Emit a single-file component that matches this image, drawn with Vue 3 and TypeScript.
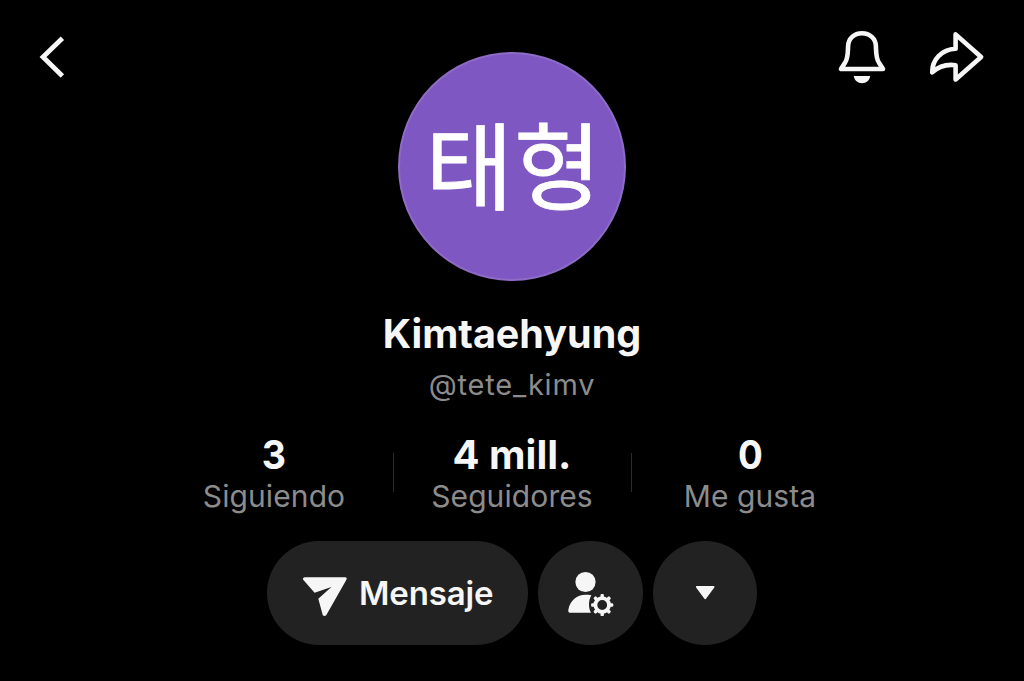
<script setup lang="ts">
interface Stat {
  id: string
  value: string
  label: string
}

const stats: Stat[] = [
  { id: 'following', value: '3', label: 'Siguiendo' },
  { id: 'followers', value: '4 mill.', label: 'Seguidores' },
  { id: 'likes', value: '0', label: 'Me gusta' },
]

const teeth: number[] = [0, 45, 90, 135, 180, 225, 270, 315]
</script>

<template>
  <main class="profile">
    <header class="top">
      <svg class="back" width="30" height="44" viewBox="38 35 30 44">
        <path d="M62.4 38.2L43 57L62.4 76" fill="none" stroke="#f6f6f6" stroke-width="4.8" />
      </svg>
      <div class="avatar"><span>태형</span></div>
      <div class="actions">
        <svg width="50" height="56" viewBox="837 29 50 56">
          <path
            d="M862 33.2C854 33.2 848.4 38.6 848.1 46C847.8 54 848 58.5 845 62.8L841 69H883L879 62.8C876 58.5 876.2 54 875.9 46C875.6 38.6 870 33.2 862 33.2Z"
            fill="none" stroke="#f6f6f6" stroke-width="4.6" stroke-linejoin="round"
          />
          <path d="M853.8 76H870.2C869.6 80.4 866.4 83.2 862 83.2C857.6 83.2 854.4 80.4 853.8 76Z" fill="#f6f6f6" />
        </svg>
        <svg class="share" width="58" height="56" viewBox="928 29 58 56">
          <path
            d="M955.6 34.4L981.1 57L955.6 79.4V65.2C947.5 64.2 939.5 65.6 932.2 72.4C932 59.5 941.5 49.6 955.6 48.8Z"
            fill="none" stroke="#f6f6f6" stroke-width="4.6" stroke-linejoin="round"
          />
        </svg>
      </div>
    </header>

    <h1 class="name"><span>Kimtaehyung</span></h1>
    <p class="handle"><span>@tete_kimv</span></p>

    <section class="stats">
      <div v-for="s in stats" :key="s.id" class="stat" :class="s.id">
        <strong>{{ s.value }}</strong>
        <span class="label">{{ s.label }}</span>
      </div>
    </section>

    <nav class="buttons">
      <button class="btn message">
        <svg width="46" height="42" viewBox="302 576 46 42">
          <path
            d="M304.6 577.2H345.2Q347.4 577.6 346.4 579.8L326.2 615.2Q324.4 616.8 322.8 615.2L318.3 598.8L331.4 586.9L314.6 592.8L303.2 579.8Q302.2 577.8 304.6 577.2Z"
            fill="#f6f6f6"
          />
        </svg>
        <span>Mensaje</span>
      </button>
      <button class="btn round">
        <svg width="104" height="104" viewBox="538.2 541 104 104">
          <circle cx="585.7" cy="582" r="10.1" fill="#f6f6f6" />
          <path
            d="M591.6 595.3C588.6 600.3 588.4 607.5 591.2 612.8H570.8C569 612.8 568.2 611.6 568.5 609.9C570.2 600.6 577.3 594.8 585.7 594.8C587.8 594.8 589.8 594.9 591.6 595.3Z"
            fill="#f6f6f6"
          />
          <g transform="translate(602.4 605)">
            <circle r="6.8" fill="none" stroke="#f6f6f6" stroke-width="3.8" />
            <rect
              v-for="a in teeth" :key="a" x="-1.7" y="-11.1" width="3.4" height="4.5" rx="1.2"
              fill="#f6f6f6" :transform="`rotate(${a})`"
            />
          </g>
        </svg>
      </button>
      <button class="btn round">
        <svg width="104" height="104" viewBox="652.7 541 104 104">
          <path
            d="M696.6 586.9H713.2L704.9 598.2Z"
            fill="#f6f6f6" stroke="#f6f6f6" stroke-width="2" stroke-linejoin="round"
          />
        </svg>
      </button>
    </nav>
  </main>
</template>

<style>
html,
body {
  margin: 0;
  background: #000;
}
</style>

<style scoped>
.profile {
  box-sizing: border-box;
  width: 1024px;
  height: 681px;
  overflow: hidden;
  background: #000;
  color: #f6f6f6;
  font-family: Inter, "Noto Sans", "Noto Sans CJK KR", sans-serif;
  display: flex;
  flex-direction: column;
  align-items: center;
}
svg {
  display: block;
  flex: none;
}
.top {
  box-sizing: border-box;
  width: 100%;
  height: 281px;
  padding: 29px 38px 0;
  display: grid;
  grid-template-columns: 1fr 228px 1fr;
}
.back {
  margin-top: 6px;
}
.avatar {
  box-sizing: border-box;
  width: 228px;
  height: 229px;
  margin-top: 23px;
  padding: 0 0 10px 4px;
  border: 2px solid #8e6cc6;
  border-radius: 50%;
  background: #7e57c2;
  color: #fff;
  font: 400 95px/1 "Noto Sans CJK KR", sans-serif;
  letter-spacing: 1px;
  -webkit-text-stroke: 0.8px #fff;
  display: flex;
  align-items: center;
  justify-content: center;
}
.actions {
  display: flex;
  justify-content: flex-end;
  gap: 41px;
}
.name,
.handle {
  margin: 0;
  white-space: nowrap;
}
.name {
  margin-top: 29px;
  font-size: 39.5px;
  line-height: 48px;
  font-weight: 700;
}
.name span,
.handle span,
.stat strong,
.label,
.message span {
  display: inline-block;
}
.handle {
  margin-top: 9px;
  font-size: 29px;
  line-height: 36px;
  letter-spacing: 0.8px;
  color: #8c8c8c;
}
.stats {
  margin-top: 30px;
  height: 89px;
  display: grid;
  grid-template-columns: repeat(3, 238px);
}
.stat {
  display: flex;
  flex-direction: column;
  align-items: center;
  position: relative;
}
.stat + .stat::before {
  content: "";
  position: absolute;
  left: 0;
  top: 20px;
  width: 1px;
  height: 39px;
  background: #2c2c2c;
}
.stat strong {
  font-size: 40px;
  line-height: 44px;
  font-weight: 700;
}
.likes strong {
  transform: scaleX(0.92);
}
.following strong {
  transform: scaleX(0.94);
}
.label {
  font-size: 30px;
  line-height: 38px;
  letter-spacing: 0.1px;
  color: #8c8c8c;
}
.buttons {
  margin-top: 19px;
  display: flex;
  gap: 10px;
}
.btn {
  border: 0;
  padding: 0;
  height: 104px;
  border-radius: 52px;
  background: #222;
  color: #f6f6f6;
  font-family: inherit;
  display: flex;
  align-items: center;
}
.message {
  box-sizing: border-box;
  width: 261px;
  padding-left: 35px;
  gap: 11px;
  font-size: 33px;
  font-weight: 600;
  letter-spacing: -0.15px;
}
.message svg {
  margin-top: 8px;
}
.round {
  width: 104.5px;
}
</style>
